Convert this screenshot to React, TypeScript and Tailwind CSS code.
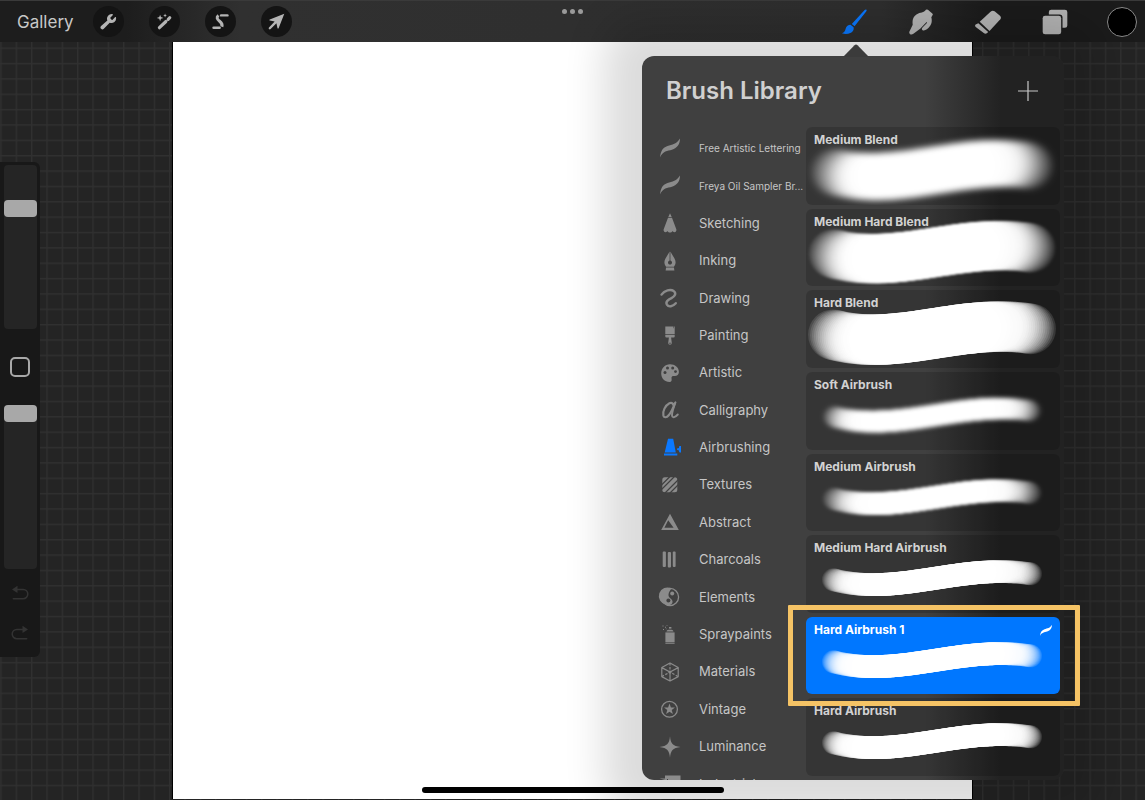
import clsx from 'clsx';
import React, { useState } from 'react';

type IconProps = { className?: string };

// ---------- Toolbar icons ----------

const WrenchIcon = ({ className }: IconProps) => (
    <svg viewBox="0 0 24 24" className={className} fill="currentColor" aria-hidden="true">
        <path d="M14.9 6.4a1 1 0 0 0 0 1.5l1.5 1.5a1 1 0 0 0 1.4 0l3.600-3.600c.4-.4 1.100-.2 1.200.4a6.600 6.600 0 0 1-8.900 7.400l-8.300 8.700a2.700 2.700 0 0 1-3.900-3.800L10.400 10.600A6.600 6.600 0 0 1 17.800 1.600c.6.1.8.8.4 1.200z" />
    </svg>
);

const WandIcon = ({ className }: IconProps) => (
    <svg viewBox="0 0 24 24" className={className} fill="currentColor" aria-hidden="true">
        <path d="M4.800 20.800 14 12M17.200 8.900l2.300-2.200" stroke="currentColor" strokeWidth="4.400" strokeLinecap="round" />
        <path d="M5.800 2.300l1.200 3.500 3.500 1.200L7 8.200l-1.200 3.500L4.600 8.200 1.100 7l3.500-1.200zM12.800.8l.8 1.900 1.900.8-1.900.8-.8 1.900-.8-1.900-1.900-.8 1.900-.8z" />
    </svg>
);

const SelectIcon = ({ className }: IconProps) => (
    <svg viewBox="0 0 24 24" className={className} fill="none" stroke="currentColor" aria-hidden="true">
        <path d="M21.800 3.400h-9" strokeWidth="3.400" strokeLinecap="round" />
        <path d="M9.200 3.600C5.800 6 7.200 8.800 10.400 11.300c3.500 2.700 4.800 4.400 3.600 8" strokeWidth="4.200" />
        <path d="M2.200 20.800h8.600" strokeWidth="3.400" strokeLinecap="round" />
    </svg>
);

const ArrowIcon = ({ className }: IconProps) => (
    <svg viewBox="0 0 24 24" className={className} fill="currentColor" aria-hidden="true">
        <path d="M23 1 2.500 9c-.8.400-.7 1.400.1 1.600l6.800 1.500L1.400 20.300a1.600 1.600 0 0 0 2.300 2.300l8.200-8 1.500 6.800c.2.800 1.200.9 1.600.1z" />
    </svg>
);

const PaintbrushIcon = ({ className }: IconProps) => (
    <svg viewBox="0 0 28 28" className={className} fill="currentColor" aria-hidden="true">
        <path d="M27.400.8c.5.500.1 1.200-.3 1.800L14.600 18.600l-3-2.500L25.500 1.200c.6-.6 1.400-.8 1.900-.4z" />
        <path d="M10.600 17.100l3 2.600c.6 2.600-.6 5-3.500 6.200-2.900 1.200-6.300 1.200-9.100.2 2.700-.8 3.400-2.300 4-4.800.7-2.700 2.900-4.300 5.600-4.200z" />
    </svg>
);

const SmudgeIcon = ({ className }: IconProps) => (
    <svg viewBox="-3 0 77 76" className={className} fill="currentColor" aria-hidden="true">
        <path d="M50 2q3-2 6 0l13 11q3 3 0 6l-3 5c3 10 1 20-5 27-4 6-12 11-17 12-6 0-8-5-4-9l13-13c1-2-1-3-3-1L33 58 13 73C7 78-1 74 1 67l10-21c-2-13 1-24 11-30 6-4 11-6 16-6 5-1 9-4 12-8z" />
    </svg>
);

const EraserIcon = ({ className }: IconProps) => (
    <svg viewBox="0 -4 77 77" className={className} fill="currentColor" aria-hidden="true">
        <path d="M14 34 46 4q6-5 12-1l16 13q5 5 1 10L43 61z" />
        <path d="M10 38l29 26-3 3q-5 4-10 0L3 50q-5-4-1-8z" />
    </svg>
);

const LayersIcon = ({ className }: IconProps) => (
    <svg viewBox="-2 -2 76 76" className={className} fill="currentColor" aria-hidden="true">
        <path d="M25 0h40q7 0 7 7v39q0 7-7 7h-7V23q0-9-9-9H18V7q0-7 7-7z" />
        <rect x="0" y="18" width="54" height="54" rx="7" />
    </svg>
);

// ---------- Brush set icons, 20x20 ----------

const SwooshIcon = ({ className }: IconProps) => (
    <svg viewBox="0 2 20 20" className={className} fill="currentColor" aria-hidden="true">
        <path d="M0 20.500C.5 13.800 3 10.400 7.500 8.900 12 7.500 17 7 19.900 1.500c.3 5.100-2.600 9.700-8 11.200C7.500 14 2.800 13.800 0 20.500z" />
    </svg>
);

const SketchingIcon = () => (
    <>
        <path d="M10 .2 8.300 4h3.400z" />
        <path d="M8 4.800h4l4.400 11.700c.3 1.500-.8 2.800-2 2.800-.9 0-1.500-.6-2-1.200-.5 1-1.300 1.500-2.400 1.500s-1.900-.5-2.400-1.500c-.5.600-1.100 1.200-2 1.200-1.200 0-2.300-1.300-2-2.800z" />
    </>
);

const InkingIcon = () => (
    <>
        <path d="M9.600.4v9.200a2 2 0 1 0 .8 0V.4c1.800 3.900 5.200 7.400 5.200 10.800 0 1.800-.8 3.300-1.700 4.600H6.100c-.9-1.300-1.700-2.800-1.700-4.600C4.400 7.800 7.800 4.300 9.600.4z" />
        <path d="M6.100 16.500h7.800l.5 2.900H5.600z" />
    </>
);

const DrawingIcon = () => (
    <path
        d="M1.500 6.600C4.500 2.300 10.500.9 13.700 3.100c3 2.200 1.200 5.300-2.200 7-3.300 1.700-6.300 3.600-4.600 6.600 1.700 2.700 5.800 2 8.900-1.500"
        fill="none"
        stroke="currentColor"
        strokeWidth="2.400"
        strokeLinecap="round"
    />
);

const PaintingIcon = () => (
    <>
        <path d="M5.300.5h8.200v1.700h.5V.5h.7v7.700H5.300zM5.300 9h9.400v1.600c0 .6-.4.900-1 .9h-2.600l.7 5.500a1.800 1.800 0 1 1-3.600 0l.7-5.500H6.300c-.6 0-1-.3-1-.9z" />
        <circle cx="10" cy="17.200" r=".7" fill="#404040" />
    </>
);

const ArtisticIcon = () => (
    <>
        <path d="M10 1.200c5 0 8.900 3.200 8.900 7.700 0 2.800-1.900 4-4 4h-1.700c-1.600 0-1.900 1.400-1.600 2.900.3 1.800-.2 3.200-2 3.200C4.500 19 1.200 15 1.200 10.200c0-5 3.800-9 8.800-9z" />
        <g fill="#404040">
            <circle cx="5" cy="9.500" r="1.500" />
            <circle cx="7.500" cy="5" r="1.500" />
            <circle cx="12.700" cy="5" r="1.500" />
            <circle cx="15.500" cy="8.600" r="1.400" />
        </g>
    </>
);

const CalligraphyIcon = () => (
    <g fill="none" stroke="currentColor" strokeLinecap="round">
        <path d="M13.800 6.500C13.600 3.500 11.800 2 9.400 3.200 5.400 5.200 2.200 11.500 3.400 15.600c.8 2.500 3.300 2 5.300-.4 2.200-2.600 4.500-7.400 6-11.700" strokeWidth="2.200" />
        <path d="M15.500 2.300c-1.700 4.500-3.500 9.300-3.500 12.700 0 3.200 2.800 2.900 5.800-.5" strokeWidth="1.900" />
    </g>
);

const AirbrushingIcon = () => (
    <path d="M8 .8h5.200l2.600 13.600H4.700zM4 15.600h13.300v1.800H4zM17 10.600l2-.6v-1.200c0-.5.400-.8.800-.8h1.200v6.400h-1.200c-.4 0-.8-.3-.8-.8V12.400l-2-.6z" />
);

const TexturesIcon = () => (
    <>
        <rect x="2.300" y="2.300" width="15" height="15" rx="2.500" />
        <path d="M1.500 10 10 1.500M1.500 14.500l13-13M4.500 18.500l14-14M9.500 18.500l9-9" stroke="#404040" strokeWidth="1.200" />
    </>
);

const AbstractIcon = () => (
    <path d="M10 .8 18.800 17H1.200zM8.200 7.200 4.400 14.800h9.200z" fillRule="evenodd" />
);

const CharcoalsIcon = () => (
    <>
        <rect x="2.700" y="1.500" width="3.200" height="15.500" rx="1" />
        <rect x="7.800" y="2" width="3.200" height="15.500" rx="1" />
        <rect x="12.800" y="1.500" width="2.800" height="15.500" rx="1" />
    </>
);

const ElementsIcon = () => (
    <>
        <circle cx="10" cy="10" r="8.600" fill="none" stroke="currentColor" strokeWidth="1.300" />
        <path d="M11.500 1.400A8.700 8.700 0 1 0 6 17.700c3.500 1.600 7-.6 6.500-3.500-.5-2.600-4.300-3-4-6.600.2-2.800 1.800-4.600 3-6.200z" />
        <circle cx="12.200" cy="6.500" r="2" />
        <circle cx="8.400" cy="13.400" r="2" fill="#404040" />
    </>
);

const SpraypaintsIcon = () => (
    <>
        <rect x="5.400" y="7.400" width="9.200" height="10" />
        <path d="M5.400 18.200h9.200V19H5.400zM6.500 6.400c.4-1.200 1.500-1.600 3.500-1.600s3.100.4 3.500 1.600z" />
        <rect x="9" y="2" width="2.400" height="1.600" />
        <path d="M2.500.5h1v1h-1zM5 1.800h1v1H5zM3 4h1v1H3zM6.600 0h.8v.8h-.8zM5.800 3.500h.8v.8h-.8z" />
    </>
);

const MaterialsIcon = () => (
    <g fill="none" stroke="currentColor" strokeWidth="1.200" strokeLinejoin="round">
        <path d="M10 1l8.200 4.600v9L10 19l-8.200-4.400v-9zM1.800 5.600 10 10l8.200-4.400M10 10v9" />
        <path d="M10 1v9M1.800 14.600 10 10l8.200 4.600" strokeDasharray="2.500 1.500" />
        <circle cx="10" cy="10" r="1" />
    </g>
);

const VintageIcon = () => (
    <>
        <circle cx="9.500" cy="9.300" r="7.900" fill="none" stroke="currentColor" strokeWidth="1.300" />
        <path d="M9.500 3.600l1.400 4H15l-3.300 2.500 1.200 4-3.400-2.400-3.400 2.400 1.200-4L4 7.600h4.100z" />
    </>
);

const LuminanceIcon = () => (
    <path d="M10-.8c.7 7.300 2.600 9.800 10.500 10.800C12.600 11 10.700 13.500 10 20.800 9.300 13.500 7.400 11-.5 10 7.400 9 9.300 6.500 10-.8z" />
);

const IndustrialIcon = () => <path d="M5 1.500h15.500v12H8V5H5zM-.5 4.500H7v2z" />;

// ---------- Data ----------

interface BrushSet {
    name: string;
    icon?: React.FC;
}

const BRUSH_SETS: BrushSet[] = [
    { name: 'Free Artistic Lettering' },
    { name: 'Freya Oil Sampler Br...' },
    { name: 'Sketching', icon: SketchingIcon },
    { name: 'Inking', icon: InkingIcon },
    { name: 'Drawing', icon: DrawingIcon },
    { name: 'Painting', icon: PaintingIcon },
    { name: 'Artistic', icon: ArtisticIcon },
    { name: 'Calligraphy', icon: CalligraphyIcon },
    { name: 'Airbrushing', icon: AirbrushingIcon },
    { name: 'Textures', icon: TexturesIcon },
    { name: 'Abstract', icon: AbstractIcon },
    { name: 'Charcoals', icon: CharcoalsIcon },
    { name: 'Elements', icon: ElementsIcon },
    { name: 'Spraypaints', icon: SpraypaintsIcon },
    { name: 'Materials', icon: MaterialsIcon },
    { name: 'Vintage', icon: VintageIcon },
    { name: 'Luminance', icon: LuminanceIcon },
    { name: 'Industrial', icon: IndustrialIcon },
];

interface Brush {
    name: string;
    radius: number;
    flow: number; // opacity of the first dab, before pressure builds up
    ramp: number; // part of the stroke over which pressure builds up
    spacing: number;
    softness: number;
    custom?: boolean;
}

const BRUSHES: Brush[] = [
    { name: 'Medium Blend', radius: 24, flow: 0.07, ramp: 0.3, spacing: 2, softness: 3 },
    { name: 'Medium Hard Blend', radius: 25, flow: 0.09, ramp: 0.28, spacing: 2, softness: 1.3 },
    { name: 'Hard Blend', radius: 25.5, flow: 0.12, ramp: 0.28, spacing: 2, softness: 0.3 },
    { name: 'Soft Airbrush', radius: 11, flow: 0.07, ramp: 0.25, spacing: 1, softness: 2 },
    { name: 'Medium Airbrush', radius: 11.5, flow: 0.05, ramp: 0.3, spacing: 1, softness: 1.5 },
    { name: 'Medium Hard Airbrush', radius: 11.5, flow: 0.1, ramp: 0.25, spacing: 1, softness: 0.7 },
    { name: 'Hard Airbrush 1', radius: 11.5, flow: 0.12, ramp: 0.2, spacing: 1, softness: 0.3, custom: true },
    { name: 'Hard Airbrush', radius: 11.5, flow: 0.12, ramp: 0.2, spacing: 1, softness: 0.3 },
];

// ---------- Stroke preview ----------

const CURVE = [[27, 45], [92, 62], [155, 28], [225, 39]];

const pointAt = (t: number) => {
    const u = 1 - t;
    const w = [u * u * u, 3 * u * u * t, 3 * u * t * t, t * t * t];
    return [0, 1].map((axis) => CURVE.reduce((sum, p, i) => sum + p[axis] * w[i], 0));
};

const flowAt = (brush: Brush, t: number) => {
    const pressure = Math.min(1, Math.min(t, 1 - t) / brush.ramp);
    return brush.flow + (0.8 - brush.flow) * pressure * pressure;
};

const StrokePreview: React.FC<{ brush: Brush }> = ({ brush }) => {
    const count = Math.round(200 / brush.spacing);
    const id = `soft-${brush.name.replace(/ /g, '-')}`;

    return (
        <svg viewBox="0 0 254 78" className="absolute inset-0 h-full w-full" aria-hidden="true">
            <filter id={id} x="-10%" y="-30%" width="120%" height="160%">
                <feGaussianBlur stdDeviation={brush.softness} />
            </filter>
            <g fill="#fff" filter={`url(#${id})`}>
                {Array.from({ length: count + 1 }, (_, i) => {
                    const t = i / count;
                    const [x, y] = pointAt(t);
                    return <circle key={i} cx={x} cy={y} r={brush.radius} opacity={flowAt(brush, t)} />;
                })}
            </g>
        </svg>
    );
};

// ---------- Page sections ----------

const ACTIONS = [
    { label: 'Actions', icon: WrenchIcon },
    { label: 'Adjustments', icon: WandIcon },
    { label: 'Selection', icon: SelectIcon },
    { label: 'Transform', icon: ArrowIcon },
];

const TOOLS = [
    { label: 'Paint', icon: PaintbrushIcon },
    { label: 'Smudge', icon: SmudgeIcon },
    { label: 'Erase', icon: EraserIcon },
    { label: 'Layers', icon: LayersIcon },
];

const TopBar = () => (
    <header className="grid h-[42px] shrink-0 grid-cols-[1fr_auto_1fr] items-center border-t border-[#3a3a3a] bg-[linear-gradient(to_right,#1d1d1d_11%,#303030_21%,#2e2e2e_77%,#1b1b1b_86%)]">
        <div className="flex items-center pl-[17px]">
            <button className="text-[17px] leading-5 text-[#c8c8c8]">Gallery</button>
            <div className="ml-[19px] flex gap-[25px]">
                {ACTIONS.map(({ label, icon: Icon }) => (
                    <button
                        key={label}
                        aria-label={label}
                        className="flex size-[31px] items-center justify-center rounded-full bg-[#141414] text-[#b4b4b4]"
                    >
                        <Icon className="size-[17px]" />
                    </button>
                ))}
            </div>
        </div>

        <button aria-label="More" className="mt-2 flex gap-[3px] self-start">
            <span className="size-[5px] rounded-full bg-[#9a9a9a]" />
            <span className="size-[5px] rounded-full bg-[#9a9a9a]" />
            <span className="size-[5px] rounded-full bg-[#9a9a9a]" />
        </button>

        <div className="flex items-center justify-end gap-[37px] pr-2">
            {TOOLS.map(({ label, icon: Icon }) => (
                <button
                    key={label}
                    aria-label={label}
                    className={clsx(
                        'flex size-[30px] items-center justify-center',
                        label === 'Paint' ? 'text-[#0a78ff]' : 'text-[#b4b4b4]'
                    )}
                >
                    <Icon className="size-[26px]" />
                </button>
            ))}
            <button aria-label="Color" className="size-[30px] rounded-full border border-[#8a8a8a] bg-black" />
        </div>
    </header>
);

const SideSlider: React.FC<{ label: string; initial: number }> = ({ label, initial }) => {
    const [value, setValue] = useState(initial);
    return (
        <input
            type="range"
            aria-label={label}
            value={value}
            onChange={(e) => setValue(Number(e.target.value))}
            className="h-[164px] w-[33px] appearance-none rounded bg-[#252525] [direction:rtl] [writing-mode:vertical-lr] [&::-webkit-slider-thumb]:h-[17px] [&::-webkit-slider-thumb]:w-[33px] [&::-webkit-slider-thumb]:appearance-none [&::-webkit-slider-thumb]:rounded [&::-webkit-slider-thumb]:bg-[#a8a8a8]"
        />
    );
};

const SideBar = () => (
    <aside className="mt-[120px] flex w-10 flex-col items-center self-start rounded-r-md bg-[#181818] pt-[3px] pb-4">
        <SideSlider label="Brush size" initial={76} />
        <button aria-label="Modify" className="my-7 size-5 rounded-[5px] border-2 border-[#a8a8a8]" />
        <SideSlider label="Brush opacity" initial={100} />
        <button aria-label="Undo" className="mt-4 text-[#333]">
            <svg viewBox="0 0 18 16" className="h-4 w-[18px]" fill="none" stroke="currentColor" strokeWidth="1.500">
                <path d="M6 4.500h6.200a4.500 4.500 0 0 1 0 9.200H2.300" strokeLinecap="round" />
                <path d="M6.500.8v7.200L1 4.500z" fill="currentColor" stroke="none" />
            </svg>
        </button>
        <button aria-label="Redo" className="mt-6 text-[#333]">
            <svg viewBox="0 0 18 16" className="h-4 w-[18px]" fill="none" stroke="currentColor" strokeWidth="1.500">
                <path d="M12 4.500H5.800a4.500 4.500 0 0 0 0 9.200h9.900" strokeLinecap="round" />
                <path d="M11.500.8v7.200L17 4.500z" fill="currentColor" stroke="none" />
            </svg>
        </button>
    </aside>
);

const BrushSetList = () => {
    const [active, setActive] = useState('Airbrushing');
    return (
        <ul className="flex h-[673px] flex-col">
            {BRUSH_SETS.map(({ name, icon: Icon }) => (
                <li key={name} className="flex flex-1">
                    <button onClick={() => setActive(name)} className="flex w-full items-center gap-[19px] text-left">
                        <span className={clsx('shrink-0', active === name ? 'text-[#0a78ff]' : 'text-[#8b8b8b]')}>
                            {Icon ? (
                                <svg viewBox="0 0 20 20" className="size-5 overflow-visible" fill="currentColor" aria-hidden="true">
                                    <Icon />
                                </svg>
                            ) : (
                                <SwooshIcon className="size-5 overflow-visible" />
                            )}
                        </span>
                        <span className={clsx('whitespace-nowrap text-[#c6c6c6]', Icon ? 'text-[13px]' : 'text-[10px]')}>
                            {name}
                        </span>
                    </button>
                </li>
            ))}
        </ul>
    );
};

const BrushList = () => {
    const [selected, setSelected] = useState('Hard Airbrush 1');
    return (
        <ul className="flex flex-1 flex-col gap-1 pr-1 pb-1">
            {BRUSHES.map((brush) => {
                const isSelected = selected === brush.name;
                return (
                    <li key={brush.name} className={clsx('relative flex flex-1', isSelected && 'z-10')}>
                        <button
                            onClick={() => setSelected(brush.name)}
                            className={clsx(
                                'relative flex w-full items-start justify-between overflow-hidden rounded-md py-1 pr-2 pl-2 text-left',
                                isSelected ? 'bg-[#0077ff] text-white' : 'bg-black/16 text-[#d2d2d2]'
                            )}
                        >
                            <StrokePreview brush={brush} />
                            <span className="relative text-[12px] leading-[18px] font-bold">{brush.name}</span>
                            {brush.custom && <SwooshIcon className="relative mt-1 size-3 overflow-visible" />}
                        </button>
                        {isSelected && (
                            <span className="pointer-events-none absolute -top-3 -right-5 -bottom-3 -left-[18px] rounded-[1px] border-[5px] border-[#f5c365]" />
                        )}
                    </li>
                );
            })}
        </ul>
    );
};

const BrushLibrary = () => (
    <section
        aria-label="Brush Library"
        className="absolute top-14 right-[81px] bottom-5 flex w-[422px] flex-col rounded-xl bg-[linear-gradient(to_right,#404040_67%,#222222_85%)] shadow-[0_0_40px_38px_rgba(0,0,0,0.14)]"
    >
        <svg viewBox="0 0 26 13" className="absolute -top-3 left-[201px] h-[13px] w-[26px]" aria-hidden="true">
            <path d="M0 13 11.500 1.200q1.500-1.400 3 0L26 13z" fill="#3b3b3b" />
        </svg>
        <div className="flex h-[71px] items-center justify-between pr-[26px] pb-[2px] pl-6">
            <h1 className="text-[24px] leading-8 font-semibold text-[#d0d0d0]">Brush Library</h1>
            <button aria-label="New brush" className="text-[#c8c8c8]">
                <svg viewBox="0 0 20 20" className="size-5" stroke="currentColor" strokeWidth="1.200">
                    <path d="M10 0v20M0 10h20" />
                </svg>
            </button>
        </div>
        <div className="flex min-h-0 flex-1">
            <div className="w-[164px] shrink-0 overflow-hidden rounded-bl-xl pt-[3px] pl-[18px]">
                <BrushSetList />
            </div>
            <BrushList />
        </div>
    </section>
);

const GridBackground = () => (
    <svg className="absolute inset-0 h-full w-full" aria-hidden="true">
        <pattern id="grid" x="0.3" y="1.4" width="15.34" height="15.36" patternUnits="userSpaceOnUse">
            <path d="M.7 0v15.360M0 .7h15.340" stroke="#303030" strokeWidth="1.400" />
        </pattern>
        <rect width="100%" height="100%" fill="#242424" />
        <rect width="100%" height="100%" fill="url(#grid)" />
    </svg>
);

export default function App() {
    return (
        <div className="relative flex h-screen flex-col overflow-hidden font-['Inter',sans-serif] select-none">
            <GridBackground />
            <div className="relative flex min-h-0 flex-1 flex-col">
                <TopBar />
                <main className="grid min-h-0 flex-1 grid-cols-[1fr_70%_1fr] pb-px">
                    <SideBar />
                    <div className="border-x border-black bg-white" />
                </main>
                <BrushLibrary />
                <div className="absolute bottom-[7px] left-1/2 h-[6px] w-[302px] -translate-x-1/2 rounded-full bg-black" />
            </div>
        </div>
    );
}
